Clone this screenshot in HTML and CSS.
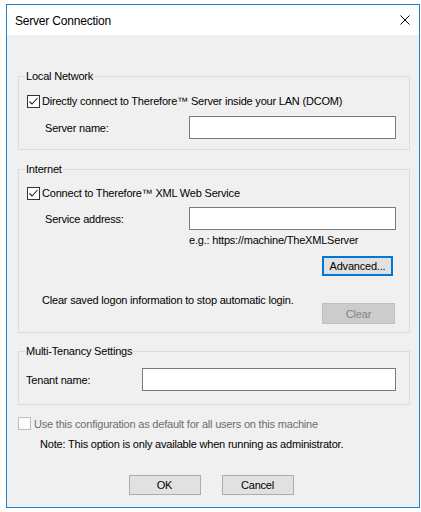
FILE: index.html
```html
<!DOCTYPE html>
<html lang="en">
<head>
<meta charset="utf-8">
<title>Server Connection</title>
<link rel="stylesheet" href="styles.css">
</head>
<body>
<div class="window">
  <div class="titlebar">
    <span class="title">Server Connection</span>
    <svg class="close" width="10" height="10" viewBox="0 0 10 10"><path d="M0.5 0.5 L9.5 9.5 M9.5 0.5 L0.5 9.5" stroke="#000" stroke-width="1" fill="none"/></svg>
  </div>
  <div class="client">
    <fieldset class="group group-local">
      <legend>Local Network</legend>
      <div class="check-row">
        <span class="checkbox"><svg width="11" height="11" viewBox="0 0 11 11"><polyline points="1.5,5.5 4,8 9.5,2" stroke="#222" stroke-width="1.1" fill="none"/></svg></span>
        <span>Directly connect to Therefore™ Server inside your LAN (DCOM)</span>
      </div>
      <div class="field-row field-row-indent">
        <span class="field-label">Server name:</span>
        <span class="input"></span>
      </div>
    </fieldset>

    <fieldset class="group group-internet">
      <legend>Internet</legend>
      <div class="check-row check-row-tight">
        <span class="checkbox"><svg width="11" height="11" viewBox="0 0 11 11"><polyline points="1.5,5.5 4,8 9.5,2" stroke="#222" stroke-width="1.1" fill="none"/></svg></span>
        <span>Connect to Therefore™ XML Web Service</span>
      </div>
      <div class="field-row field-row-indent field-row-tight">
        <span class="field-label">Service address:</span>
        <span class="input"></span>
      </div>
      <div class="hint">e.g.: https://machine/TheXMLServer</div>
      <div class="advanced-row">
        <span class="btn btn-default btn-advanced">Advanced...</span>
      </div>
      <div class="clear-row">
        <span class="clear-text">Clear saved logon information to stop automatic login.</span>
        <span class="btn btn-disabled btn-clear">Clear</span>
      </div>
    </fieldset>

    <fieldset class="group group-tenancy">
      <legend>Multi-Tenancy Settings</legend>
      <div class="field-row field-row-tenant">
        <span class="field-label">Tenant name:</span>
        <span class="input input-wide"></span>
      </div>
    </fieldset>

    <div class="default-row">
      <span class="checkbox checkbox-disabled"></span>
      <span>Use this configuration as default for all users on this machine</span>
    </div>
    <div class="note">Note: This option is only available when running as administrator.</div>

    <div class="buttons">
      <span class="btn">OK</span>
      <span class="btn">Cancel</span>
    </div>
  </div>
</div>
</body>
</html>
```

FILE: styles.css
```css
* { box-sizing: border-box; }

html, body {
  margin: 0;
  background: #fff;
}

body {
  padding: 4px 0 0 6px;
  font-family: "Liberation Sans", Arial, sans-serif;
  font-size: 11px;
  letter-spacing: -0.2px;
  color: #000;
}

.window {
  width: 414px;
  height: 504px;
  border: 1px solid #1883d7;
  background: #f0f0f0;
  display: flex;
  flex-direction: column;
}

.titlebar {
  height: 30px;
  flex: none;
  background: #fff;
  display: flex;
  align-items: center;
  justify-content: space-between;
  padding: 0 9px 0 8px;
}

.title {
  font-size: 12px;
  line-height: 14px;
  padding-top: 1px;
}

.close { display: block; }

.client {
  flex: 1;
  padding: 34px 9px 0 11px;
  display: flex;
  flex-direction: column;
}

.group {
  margin: 0;
  padding: 0;
  border: 1px solid #dcdcdc;
  min-width: 0;
}

.group legend {
  margin-left: 6px;
  padding: 0 1px;
  line-height: 14px;
}

.group-internet { margin-top: 12px; }
.group-tenancy { margin-top: 11px; }

.group-local { padding-bottom: 10px; }
.group-internet { padding-bottom: 8px; }
.group-tenancy { padding-bottom: 13px; }

.check-row {
  display: flex;
  align-items: center;
  gap: 2px;
  height: 18px;
  margin-top: 9px;
  padding-left: 8px;
}

.check-row-tight { margin-top: 8px; }

.checkbox {
  width: 13px;
  height: 13px;
  flex: none;
  border: 1px solid #333;
  background: #fff;
  display: flex;
  align-items: center;
  justify-content: center;
}

.checkbox svg { display: block; }

.checkbox-disabled {
  border-color: #bcbcbc;
  background: #fcfcfc;
}

.field-row {
  display: flex;
  align-items: center;
  margin-top: 6px;
  padding-right: 13px;
}

.field-row-indent { padding-left: 26px; }
.field-row-tight { margin-top: 5px; }
.field-row-tenant { padding-left: 7px; margin-top: 10px; }

.field-label {
  flex: 1;
  line-height: 14px;
}

.input {
  width: 207px;
  height: 23px;
  flex: none;
  background: #fff;
  border: 1px solid #7a7a7a;
}

.input-wide { width: 254px; }

.hint {
  margin-top: 3px;
  padding-left: 170px;
  line-height: 14px;
}

.advanced-row {
  display: flex;
  justify-content: flex-end;
  margin-top: 9px;
  padding-right: 16px;
}

.btn {
  display: flex;
  align-items: center;
  justify-content: center;
  width: 72px;
  height: 20px;
  background: #e1e1e1;
  border: 1px solid #adadad;
  line-height: 14px;
}

.btn-default {
  border: 2px solid #0078d7;
}

.btn-advanced { width: 71px; }

.btn-disabled {
  background: #cccccc;
  border-color: #bfbfbf;
  color: #838383;
}

.clear-row {
  display: flex;
  justify-content: space-between;
  align-items: flex-start;
  margin-top: 17px;
  padding-left: 23px;
  padding-right: 14px;
}

.clear-text { line-height: 14px; }

.btn-clear {
  width: 73px;
  height: 21px;
  margin-top: 10px;
}

.default-row {
  display: flex;
  align-items: center;
  gap: 3px;
  height: 13px;
  margin-top: 12px;
  color: #6d6d6d;
}

.note {
  margin-top: 7px;
  padding-left: 22px;
  line-height: 14px;
}

.buttons {
  display: flex;
  justify-content: center;
  gap: 21px;
  margin-top: 24px;
  padding-right: 6px;
}
```
